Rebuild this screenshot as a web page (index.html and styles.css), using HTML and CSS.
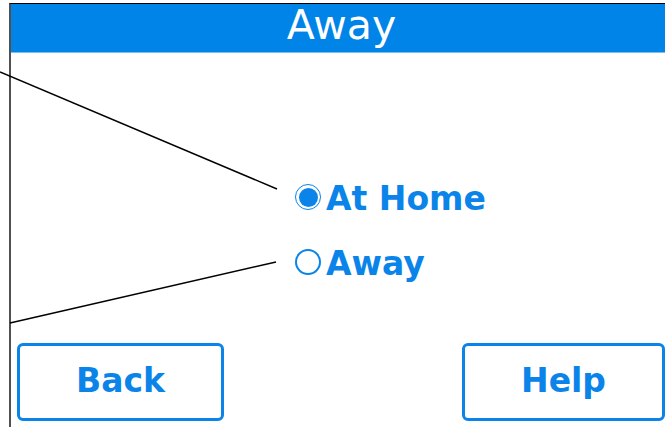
FILE: index.html
```html
<!DOCTYPE html>
<html lang="en">
<head>
<meta charset="utf-8">
<title>Away</title>
<link rel="stylesheet" href="styles.css">
</head>
<body>
<div class="page">
  <div class="screen">
    <div class="header">Away</div>
    <div class="options">
      <div class="option">
        <span class="radio radio-on"><span class="dot"></span></span>
        <span class="label">At Home</span>
      </div>
      <div class="option">
        <span class="radio"></span>
        <span class="label">Away</span>
      </div>
    </div>
    <div class="buttons">
      <div class="btn btn-back">Back</div>
      <div class="btn btn-help">Help</div>
    </div>
  </div>
  <svg class="callouts" width="665" height="427" viewBox="0 0 665 427">
    <line x1="0" y1="72" x2="277" y2="189" stroke="#000" stroke-width="1.4"/>
    <line x1="10" y1="323" x2="276" y2="262" stroke="#000" stroke-width="1.4"/>
  </svg>
</div>
</body>
</html>
```

FILE: styles.css
```css
html, body {
  margin: 0;
  padding: 0;
  background: #fff;
}

.page {
  position: relative;
  width: 665px;
  height: 427px;
  overflow: hidden;
  padding: 3px 0 0 9px;
  box-sizing: border-box;
  font-family: "DejaVu Sans", Verdana, sans-serif;
}

.screen {
  height: 424px;
  border-left: 2px solid #505050;
  border-top: 1px solid #000;
  box-sizing: border-box;
  display: flex;
  flex-direction: column;
}

.header {
  flex: none;
  height: 48px;
  line-height: 42px;
  padding-left: 7px;
  background: #0084e8;
  border-bottom: 1px solid #7bbcf2;
  color: #fff;
  font-size: 41px;
  text-align: center;
}

.options {
  flex: none;
  margin: 124px 0 0 284px;
  display: flex;
  flex-direction: column;
  gap: 25px;
}

.option {
  height: 40px;
  display: flex;
  align-items: center;
  gap: 5px;
  color: #0a84e8;
  font-weight: bold;
  font-size: 33px;
}

.label {
  padding-top: 2px;
}

.radio {
  width: 26px;
  height: 26px;
  box-sizing: border-box;
  border: 2px solid #0a84e8;
  border-radius: 50%;
  display: flex;
  align-items: center;
  justify-content: center;
}

.radio-on {
  border-width: 1.5px;
}

.dot {
  width: 19px;
  height: 19px;
  border-radius: 50%;
  background: #0a84e8;
}

.buttons {
  flex: none;
  margin-top: 61px;
  padding-left: 6px;
  display: flex;
  justify-content: space-between;
}

.btn {
  height: 78px;
  box-sizing: border-box;
  border: 3px solid #0a84e8;
  border-radius: 6px;
  color: #0a84e8;
  font-weight: bold;
  font-size: 33px;
  display: flex;
  align-items: center;
  justify-content: center;
  padding-bottom: 4px;
}

.btn-back {
  width: 207px;
}

.btn-help {
  width: 203px;
}

.callouts {
  position: absolute;
  left: 0;
  top: 0;
  pointer-events: none;
}
```
